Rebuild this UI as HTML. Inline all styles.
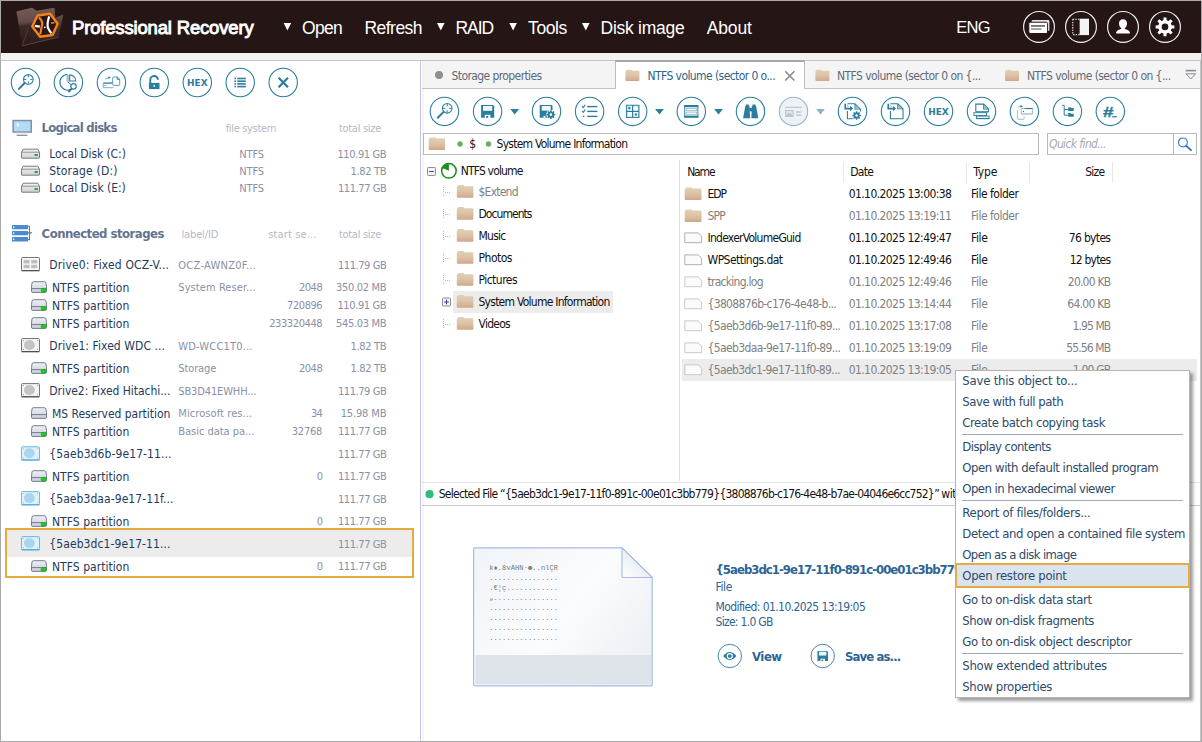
<!DOCTYPE html>
<html lang="en"><head><meta charset="utf-8"><title>Professional Recovery</title>
<style>
html,body{margin:0;padding:0;}
body{width:1202px;height:742px;position:relative;overflow:hidden;background:#fff;font-family:'DejaVu Sans Condensed','Liberation Sans','DejaVu Sans',sans-serif;font-size:12px;}
.a{position:absolute;display:block;box-sizing:border-box;}
.t{position:absolute;white-space:pre;line-height:normal;}
</style></head><body>
<div class="a" style="left:0px;top:0px;width:1202px;height:742px;background:#fff;border:1px solid #a9a9a9;"></div>
<div class="a" style="left:1px;top:1px;width:1200px;height:52px;background:#251514;"></div>
<div class="a" style="left:1px;top:53px;width:1200px;height:7px;background:#f3f3f3;"></div>
<div class="a" style="left:1px;top:60px;width:1200px;height:1px;background:#c4c4c4;"></div>
<div class="a" style="left:1200px;top:61px;width:1px;height:680px;background:#c6c6c6;"></div>
<svg class="a" style="left:15px;top:5px;" width="51" height="45"><g transform="translate(0,0)">
<defs>
<linearGradient id="lg1" x1="0" y1="0" x2="0.12" y2="1"><stop offset="0" stop-color="#775d58"/><stop offset="0.40" stop-color="#654b47"/><stop offset="0.50" stop-color="#3b2826"/><stop offset="1" stop-color="#2b1a19"/></linearGradient>
<linearGradient id="lg2" x1="1" y1="0" x2="0.2" y2="1"><stop offset="0" stop-color="#6a534f"/><stop offset="0.35" stop-color="#3c2a28"/><stop offset="1" stop-color="#2d1c1b"/></linearGradient>
</defs>
<path d="M1.4,6.4 L16.6,2.8 Q17.6,2.6 18.4,3.4 L21.6,5.8 L38.6,2.8 Q39.6,2.7 39.7,3.8 L41,24 L7.1,40.8 Z" fill="url(#lg1)"/>
<path d="M13.6,23 L48.3,9.6 L43.6,32.1 L7.1,40.8 Z" fill="url(#lg2)"/>
<path d="M7.1,40.8 L43.6,32.1" stroke="#5e4845" stroke-width="0.9"/>
<path d="M7.1,40.8 L13.6,23" stroke="#5a4441" stroke-width="0.7"/>
<polygon points="17.2,21.5 22.6,10.5 35.1,8.7 42.7,18.7 37.6,30.0 25.1,31.8" fill="#2a1716" stroke="#f5821a" stroke-width="2.4" stroke-linejoin="round"/>
<path d="M23.8,12.4 Q27.6,15.6 27.2,19 L25.2,29.4" fill="none" stroke="#f5821a" stroke-width="2.1"/>
<path d="M34.2,11.4 Q32,18 32.8,22.4 Q34,25.6 36.4,28.2" fill="none" stroke="#fff" stroke-width="2.2"/>
<path d="M19.8,20.9 L24.8,21.6" stroke="#fff" stroke-width="2.1"/>
<circle cx="29.8" cy="22.3" r="0.9" fill="#fff"/>
<path d="M36,18 L39.6,17.8" stroke="#f5821a" stroke-width="1.5"/>
</g></svg>
<span class="t" style="top:17.00px;font-size:18.5px;color:#fff;font-family:'Liberation Sans','DejaVu Sans Condensed',sans-serif;letter-spacing:-0.171px;left:72.00px;-webkit-text-stroke:0.9px #fff;">Professional Recovery</span>
<svg class="a" style="left:283px;top:23px;" width="10" height="9"><g transform="translate(0.6,0)"><polygon points="0,0 7.6,0 3.8,7.6" fill="#fff"/></g></svg>
<span class="t" style="top:18.00px;font-size:17.5px;color:#fff;font-family:'Liberation Sans','DejaVu Sans Condensed',sans-serif;letter-spacing:-0.703px;left:302.00px;">Open</span>
<span class="t" style="top:18.00px;font-size:17.5px;color:#fff;font-family:'Liberation Sans','DejaVu Sans Condensed',sans-serif;letter-spacing:-0.540px;left:364.50px;">Refresh</span>
<svg class="a" style="left:437px;top:23px;" width="9" height="9"><g transform="translate(0,0)"><polygon points="0,0 7.6,0 3.8,7.6" fill="#fff"/></g></svg>
<span class="t" style="top:18.00px;font-size:17.5px;color:#fff;font-family:'Liberation Sans','DejaVu Sans Condensed',sans-serif;letter-spacing:-1.078px;left:455.50px;">RAID</span>
<svg class="a" style="left:509px;top:23px;" width="9" height="9"><g transform="translate(0.3,0)"><polygon points="0,0 7.6,0 3.8,7.6" fill="#fff"/></g></svg>
<span class="t" style="top:18.00px;font-size:17.5px;color:#fff;font-family:'Liberation Sans','DejaVu Sans Condensed',sans-serif;letter-spacing:-0.372px;left:528.00px;">Tools</span>
<svg class="a" style="left:582px;top:23px;" width="9" height="9"><g transform="translate(0,0)"><polygon points="0,0 7.6,0 3.8,7.6" fill="#fff"/></g></svg>
<span class="t" style="top:18.00px;font-size:17.5px;color:#fff;font-family:'Liberation Sans','DejaVu Sans Condensed',sans-serif;letter-spacing:-0.256px;left:600.50px;">Disk image</span>
<span class="t" style="top:18.00px;font-size:17.5px;color:#fff;font-family:'Liberation Sans','DejaVu Sans Condensed',sans-serif;letter-spacing:-0.147px;left:706.70px;">About</span>
<span class="t" style="top:18.00px;font-size:16.5px;color:#fff;font-family:'Liberation Sans','DejaVu Sans Condensed',sans-serif;letter-spacing:-0.755px;left:956.30px;">ENG</span>
<svg class="a" style="left:1022px;top:9px;" width="35" height="36"><g transform="translate(0.0,0.9)"><g transform="translate(17.0,17.0)"><circle cx="0" cy="0" r="15.4" fill="none" stroke="#f2f2f2" stroke-width="1.15"/><rect x="-7.4" y="-6.8" width="17.8" height="11" rx="1.4" fill="#e8e8e8"/><rect x="-10.2" y="-4.7" width="18.8" height="11.3" rx="1.4" fill="#fff" stroke="#251514" stroke-width="1"/><rect x="-8" y="-1.8" width="14" height="1.7" fill="#6a6a6a"/><rect x="-8" y="1.4" width="10.5" height="1.5" fill="#8a8a8a"/></g></g></svg>
<svg class="a" style="left:1064px;top:9px;" width="35" height="36"><g transform="translate(0.0,0.9)"><g transform="translate(17.0,17.0)"><circle cx="0" cy="0" r="15.4" fill="none" stroke="#f2f2f2" stroke-width="1.15"/><rect x="-8.2" y="-7.7" width="7.4" height="15.4" fill="none" stroke="#fff" stroke-width="1.1" stroke-dasharray="1.3 1.3"/><rect x="-1.2" y="-8.2" width="9.2" height="16.4" fill="#f4f4f4"/></g></g></svg>
<svg class="a" style="left:1106px;top:9px;" width="35" height="36"><g transform="translate(0.0,0.9)"><g transform="translate(17.0,17.0)"><circle cx="0" cy="0" r="15.4" fill="none" stroke="#f2f2f2" stroke-width="1.15"/><path d="M0,-7.6 C2.6,-7.6 4,-5.6 4,-3.4 C4,-1.2 2.8,0.6 1.9,1.2 L1.9,2.2 C4,3 6.6,3.6 6.9,5.6 L6.9,6.6 L-6.9,6.6 L-6.9,5.6 C-6.6,3.6 -4,3 -1.9,2.2 L-1.9,1.2 C-2.8,0.6 -4,-1.2 -4,-3.4 C-4,-5.6 -2.6,-7.6 0,-7.6 Z" fill="#fff"/></g></g></svg>
<svg class="a" style="left:1148px;top:9px;" width="35" height="36"><g transform="translate(0.0,0.9)"><g transform="translate(17.0,17.0)"><circle cx="0" cy="0" r="15.4" fill="none" stroke="#f2f2f2" stroke-width="1.15"/><polygon points="-1.59,-6.61 -1.49,-9.38 1.49,-9.38 1.59,-6.61 3.55,-5.80 5.58,-7.69 7.69,-5.58 5.80,-3.55 6.61,-1.59 9.38,-1.49 9.38,1.49 6.61,1.59 5.80,3.55 7.69,5.58 5.58,7.69 3.55,5.80 1.59,6.61 1.49,9.38 -1.49,9.38 -1.59,6.61 -3.55,5.80 -5.58,7.69 -7.69,5.58 -5.80,3.55 -6.61,1.59 -9.38,1.49 -9.38,-1.49 -6.61,-1.59 -5.80,-3.55 -7.69,-5.58 -5.58,-7.69 -3.55,-5.80" fill="#fff"/><circle cx="0" cy="0" r="3.3" fill="#251514"/></g></g></svg>
<div class="a" style="left:420px;top:61px;width:1px;height:680px;background:#c6c6da;"></div>
<svg class="a" style="left:8px;top:65px;" width="35" height="35"><g transform="translate(0.5,0.5)"><g transform="translate(17.0,17.0)"><circle cx="0" cy="0" r="14.2" fill="none" stroke="#2b7d9d" stroke-width="1.1"/><circle cx="2.8" cy="-3.1" r="4.8" fill="none" stroke="#2b7d9d" stroke-width="1.1"/>
<path d="M-0.8,0.5 L-6.6,6.4" stroke="#2b7d9d" stroke-width="2" stroke-linecap="round"/>
<path d="M2.8,-7.4 V-5 M2.8,-1.2 V1.2 M-1.5,-3.1 H0.9 M4.7,-3.1 H7.1" stroke="#2b7d9d" stroke-width="1"/></g></g></svg>
<svg class="a" style="left:51px;top:65px;" width="35" height="35"><g transform="translate(0.4,0.5)"><g transform="translate(17.0,17.0)"><circle cx="0" cy="0" r="14.2" fill="none" stroke="#2b7d9d" stroke-width="1.1"/><path d="M-0.7,-8 A7.8,7.8 0 1 0 3.77,6.19" fill="none" stroke="#2b7d9d" stroke-width="1.1"/>
<rect x="-2" y="-7.6" width="3" height="6.8" fill="#a3c8da"/>
<path d="M1.3,-7.6 A6.1,6.1 0 0 1 7.4,-1.5 H1.3 Z" fill="#fff" stroke="#2b7d9d" stroke-width="1.1" stroke-linejoin="round"/>
<path d="M-0.6,-0.6 L2.6,2.2" stroke="#2b7d9d" stroke-width="1"/>
<circle cx="5.1" cy="3.9" r="2.7" fill="#fff" stroke="#2b7d9d" stroke-width="1.2"/>
<path d="M3,6.3 L0.6,9" stroke="#2b7d9d" stroke-width="1.9" stroke-linecap="round"/></g></g></svg>
<svg class="a" style="left:94px;top:65px;" width="35" height="35"><g transform="translate(0.4,0.5)"><g transform="translate(17.0,17.0)"><circle cx="0" cy="0" r="14.2" fill="none" stroke="#2b7d9d" stroke-width="1.1"/><path d="M-8.2,0.6 H2" stroke="#2b7d9d" stroke-width="1.3"/>
<path d="M-8.2,0.6 V5.2 H2.3" fill="none" stroke="#7fb0c6" stroke-width="1"/>
<path d="M-8.2,2.9 H-5" stroke="#7fb0c6" stroke-width="0.9"/>
<path d="M2.3,-5.6 H5.8 L8.3,-3.2 V2.2 Q8.3,2.9 7.6,2.9 H2 Q1.3,2.9 1.3,2.2 V-4.6 Q1.3,-5.6 2.3,-5.6 Z" fill="#fff" stroke="#5f9db8" stroke-width="1"/>
<path d="M5.8,-5.6 V-3.2 H8.3" fill="none" stroke="#2b7d9d" stroke-width="1"/>
<path d="M-6.4,-3 Q-4.6,-4.6 -2.6,-4.8" fill="none" stroke="#7fb0c6" stroke-width="1"/><path d="M-3,-6.2 L-0.6,-4.8 L-3,-3.6 Z" fill="#2b7d9d"/></g></g></svg>
<svg class="a" style="left:137px;top:65px;" width="35" height="35"><g transform="translate(0.3,0.5)"><g transform="translate(17.0,17.0)"><circle cx="0" cy="0" r="14.2" fill="none" stroke="#2b7d9d" stroke-width="1.1"/><rect x="-5.4" y="0.4" width="10.6" height="6.2" fill="#2b7d9d"/>
<path d="M-4,0.6 V-2.6 A3.8,3.8 0 0 1 3.6,-2.8" fill="none" stroke="#2b7d9d" stroke-width="1.9"/>
<rect x="-0.7" y="2.2" width="1.2" height="2.4" rx="0.5" fill="#fff"/></g></g></svg>
<svg class="a" style="left:180px;top:65px;" width="35" height="35"><g transform="translate(0.3,0.5)"><g transform="translate(17.0,17.0)"><circle cx="0" cy="0" r="14.2" fill="none" stroke="#2b7d9d" stroke-width="1.1"/><text x="0" y="3.55" text-anchor="middle" font-family="'DejaVu Sans','Liberation Sans',sans-serif" font-weight="bold" font-size="9.3" textLength="20.6" lengthAdjust="spacingAndGlyphs" fill="#2b7d9d">HEX</text></g></g></svg>
<svg class="a" style="left:223px;top:65px;" width="35" height="35"><g transform="translate(0.2,0.5)"><g transform="translate(17.0,17.0)"><circle cx="0" cy="0" r="14.2" fill="none" stroke="#2b7d9d" stroke-width="1.1"/><rect x="-5.8" y="-4.8" width="1.6" height="1.6" fill="#2b7d9d"/><rect x="-3" y="-4.8" width="8.6" height="1.6" fill="#2b7d9d"/><rect x="-5.8" y="-2.1" width="1.6" height="1.6" fill="#2b7d9d"/><rect x="-3" y="-2.1" width="8.6" height="1.6" fill="#2b7d9d"/><rect x="-5.8" y="0.6" width="1.6" height="1.6" fill="#2b7d9d"/><rect x="-3" y="0.6" width="8.6" height="1.6" fill="#2b7d9d"/><rect x="-5.8" y="3.3" width="1.6" height="1.6" fill="#2b7d9d"/><rect x="-3" y="3.3" width="8.6" height="1.6" fill="#2b7d9d"/></g></g></svg>
<svg class="a" style="left:266px;top:65px;" width="35" height="35"><g transform="translate(0.2,0.5)"><g transform="translate(17.0,17.0)"><circle cx="0" cy="0" r="14.2" fill="none" stroke="#2b7d9d" stroke-width="1.1"/><path d="M-4.6,-4.8 L4.8,4.8 M4.8,-4.8 L-4.6,4.8" stroke="#2b7d9d" stroke-width="2.2" stroke-linecap="butt"/></g></g></svg>
<svg class="a" style="left:12px;top:119px;" width="21" height="19"><g transform="translate(0.2,0.7)"><rect x="0.95" y="0.85" width="18.1" height="11.5" fill="#b0dcf7" stroke="#8b8da2" stroke-width="1.5"/>
<path d="M4.6,2.8 L7.6,5.4 L6,5.6 L6.8,7.2 L6,7.4 L5.4,6 L4.6,6.8 Z" fill="#f4f8fc"/>
<rect x="3.6" y="13.1" width="12.2" height="2" fill="#ececf1"/>
<rect x="4.5" y="15.1" width="10.6" height="1.2" fill="#8b8da2"/></g></svg>
<span class="t" style="top:120.00px;font-size:13px;color:#62748f;font-weight:bold;letter-spacing:-0.757px;left:41.60px;">Logical disks</span>
<span class="t" style="top:122.00px;font-size:11px;color:#b4b9c8;letter-spacing:-0.336px;left:225.70px;">file system</span>
<span class="t" style="top:122.00px;font-size:11px;color:#b4b9c8;letter-spacing:-0.277px;left:338.90px;">total size</span>
<svg class="a" style="left:21px;top:148px;" width="20" height="12"><g transform="translate(0,0.6)"><defs><linearGradient id="dk" x1="0" y1="0" x2="0" y2="1"><stop offset="0" stop-color="#f4f4f6"/><stop offset="1" stop-color="#d0d0d6"/></linearGradient></defs>
<path d="M2.2,0.6 H16.8 L18.5,3.6 V9 Q18.5,9.6 17.9,9.6 H1.1 Q0.5,9.6 0.5,9 V3.6 Z" fill="url(#dk)" stroke="#6c6c74" stroke-width="0.9"/>
<path d="M0.8,3.6 H18.2" stroke="#7a7a82" stroke-width="0.8"/>
<rect x="13.6" y="5.4" width="3.2" height="2" fill="#18b020"/></g></svg>
<span class="t" style="top:147.00px;font-size:12px;color:#1e3a5c;letter-spacing:-0.074px;left:49.30px;">Local Disk (C:)</span>
<span class="t" style="top:148.00px;font-size:11px;color:#8a90a6;letter-spacing:-0.134px;left:239.30px;">NTFS</span>
<span class="t" style="top:148.00px;font-size:11px;color:#8a90a6;letter-spacing:-0.369px;left:337.40px;">110.91 GB</span>
<svg class="a" style="left:21px;top:165px;" width="20" height="12"><g transform="translate(0,0.6)"><defs><linearGradient id="dk" x1="0" y1="0" x2="0" y2="1"><stop offset="0" stop-color="#f4f4f6"/><stop offset="1" stop-color="#d0d0d6"/></linearGradient></defs>
<path d="M2.2,0.6 H16.8 L18.5,3.6 V9 Q18.5,9.6 17.9,9.6 H1.1 Q0.5,9.6 0.5,9 V3.6 Z" fill="url(#dk)" stroke="#6c6c74" stroke-width="0.9"/>
<path d="M0.8,3.6 H18.2" stroke="#7a7a82" stroke-width="0.8"/>
<rect x="13.6" y="5.4" width="3.2" height="2" fill="#18b020"/></g></svg>
<span class="t" style="top:164.00px;font-size:12px;color:#1e3a5c;letter-spacing:0.204px;left:49.30px;">Storage (D:)</span>
<span class="t" style="top:165.00px;font-size:11px;color:#8a90a6;letter-spacing:-0.134px;left:239.30px;">NTFS</span>
<span class="t" style="top:165.00px;font-size:11px;color:#8a90a6;letter-spacing:-0.317px;left:350.50px;">1.82 TB</span>
<svg class="a" style="left:21px;top:182px;" width="20" height="12"><g transform="translate(0,0.6)"><defs><linearGradient id="dk" x1="0" y1="0" x2="0" y2="1"><stop offset="0" stop-color="#f4f4f6"/><stop offset="1" stop-color="#d0d0d6"/></linearGradient></defs>
<path d="M2.2,0.6 H16.8 L18.5,3.6 V9 Q18.5,9.6 17.9,9.6 H1.1 Q0.5,9.6 0.5,9 V3.6 Z" fill="url(#dk)" stroke="#6c6c74" stroke-width="0.9"/>
<path d="M0.8,3.6 H18.2" stroke="#7a7a82" stroke-width="0.8"/>
<rect x="13.6" y="5.4" width="3.2" height="2" fill="#18b020"/></g></svg>
<span class="t" style="top:181.00px;font-size:12px;color:#1e3a5c;letter-spacing:-0.026px;left:49.30px;">Local Disk (E:)</span>
<span class="t" style="top:182.00px;font-size:11px;color:#8a90a6;letter-spacing:-0.134px;left:239.30px;">NTFS</span>
<span class="t" style="top:182.00px;font-size:11px;color:#8a90a6;letter-spacing:-0.435px;left:338.00px;">111.77 GB</span>
<svg class="a" style="left:12px;top:225px;" width="22" height="18"><g transform="translate(0,0)"><g fill="#4a8bd2"><rect x="0" y="0" width="16" height="4.3" rx="0.5"/><rect x="0" y="6" width="16" height="4.3" rx="0.5"/><rect x="0" y="12" width="16" height="4.4" rx="0.5"/></g>
<g fill="#eaf3fc"><rect x="1" y="1.2" width="1.3" height="1.9" rx="0.5"/><rect x="1" y="7.2" width="1.3" height="1.9" rx="0.5"/><rect x="1" y="13.2" width="1.3" height="1.9" rx="0.5"/></g>
<path d="M16,1.3 H17.5 V14.6 H16 M15.4,7.9 H20" fill="none" stroke="#6f7689" stroke-width="1.1"/></g></svg>
<span class="t" style="top:226.00px;font-size:13px;color:#62748f;font-weight:bold;letter-spacing:-0.519px;left:41.60px;">Connected storages</span>
<span class="t" style="top:228.00px;font-size:11px;color:#b4b9c8;letter-spacing:-0.114px;left:181.40px;">label/ID</span>
<span class="t" style="top:228.00px;font-size:11px;color:#b4b9c8;letter-spacing:0.140px;left:268.20px;">start se...</span>
<span class="t" style="top:228.00px;font-size:11px;color:#b4b9c8;letter-spacing:-0.277px;left:338.90px;">total size</span>
<div class="a" style="left:5px;top:528px;width:409px;height:50px;border:2px solid #e5aa40;"></div>
<div class="a" style="left:7px;top:530px;width:405px;height:27px;background:#ececec;"></div>
<svg class="a" style="left:21px;top:257px;" width="20" height="15"><g transform="translate(0,0.0)"><rect x="0.5" y="0.5" width="18" height="13.2" rx="1" fill="#f6f6f6" stroke="#666" stroke-width="0.9"/>
<path d="M0.5,13.7 H18.5" stroke="#444" stroke-width="1"/>
<rect x="2.6" y="3" width="6" height="3.4" fill="#bdbdbd"/><rect x="10.2" y="3" width="6" height="3.4" fill="#bdbdbd"/>
<rect x="2.6" y="7.8" width="6" height="3.4" fill="#bdbdbd"/><rect x="10.2" y="7.8" width="6" height="3.4" fill="#bdbdbd"/></g></svg>
<span class="t" style="top:258.00px;font-size:12px;color:#1e3a5c;letter-spacing:0.149px;left:49.30px;">Drive0: Fixed OCZ-V...</span>
<span class="t" style="top:259.00px;font-size:11px;color:#8a90a6;letter-spacing:0.276px;left:178.30px;">OCZ-AWNZ0F...</span>
<span class="t" style="top:259.00px;font-size:11px;color:#8a90a6;letter-spacing:-0.424px;left:337.90px;">111.79 GB</span>
<svg class="a" style="left:31px;top:281px;" width="17" height="13"><g transform="translate(0,0.2)"><defs><linearGradient id="pk" x1="0" y1="0" x2="0" y2="1"><stop offset="0" stop-color="#eef0f5"/><stop offset="1" stop-color="#c9cdd8"/></linearGradient></defs>
<path d="M2.4,0.5 H13.4 Q14.6,0.5 15,1.8 L15.5,5.5 V10 Q15.5,11.2 14.3,11.2 H1.7 Q0.5,11.2 0.5,10 V5.5 L1,1.8 Q1.2,0.5 2.4,0.5 Z" fill="url(#pk)" stroke="#6a7184" stroke-width="0.9"/>
<path d="M0.8,7.4 H15.2" stroke="#6a7184" stroke-width="0.9"/><ellipse cx="12.5" cy="9.1" rx="2.5" ry="1.9" fill="#06e006" stroke="#0a9c0a" stroke-width="0.6"/></g></svg>
<span class="t" style="top:281.00px;font-size:12px;color:#1e3a5c;letter-spacing:0.038px;left:52.00px;">NTFS partition</span>
<span class="t" style="top:281.00px;font-size:11px;color:#8a90a6;letter-spacing:0.077px;left:178.30px;">System Reser...</span>
<span class="t" style="top:281.00px;font-size:11px;color:#8a90a6;letter-spacing:-0.497px;left:299.00px;">2048</span>
<span class="t" style="top:281.00px;font-size:11px;color:#8a90a6;letter-spacing:-0.310px;left:336.00px;">350.02 MB</span>
<svg class="a" style="left:31px;top:299px;" width="17" height="13"><g transform="translate(0,0.2)"><defs><linearGradient id="pk" x1="0" y1="0" x2="0" y2="1"><stop offset="0" stop-color="#eef0f5"/><stop offset="1" stop-color="#c9cdd8"/></linearGradient></defs>
<path d="M2.4,0.5 H13.4 Q14.6,0.5 15,1.8 L15.5,5.5 V10 Q15.5,11.2 14.3,11.2 H1.7 Q0.5,11.2 0.5,10 V5.5 L1,1.8 Q1.2,0.5 2.4,0.5 Z" fill="url(#pk)" stroke="#6a7184" stroke-width="0.9"/>
<path d="M0.8,7.4 H15.2" stroke="#6a7184" stroke-width="0.9"/><ellipse cx="12.5" cy="9.1" rx="2.5" ry="1.9" fill="#06e006" stroke="#0a9c0a" stroke-width="0.6"/></g></svg>
<span class="t" style="top:299.00px;font-size:12px;color:#1e3a5c;letter-spacing:0.038px;left:52.00px;">NTFS partition</span>
<span class="t" style="top:299.00px;font-size:11px;color:#8a90a6;letter-spacing:-0.447px;left:287.10px;">720896</span>
<span class="t" style="top:299.00px;font-size:11px;color:#8a90a6;letter-spacing:-0.369px;left:337.40px;">110.91 GB</span>
<svg class="a" style="left:31px;top:317px;" width="17" height="13"><g transform="translate(0,0.2)"><defs><linearGradient id="pk" x1="0" y1="0" x2="0" y2="1"><stop offset="0" stop-color="#eef0f5"/><stop offset="1" stop-color="#c9cdd8"/></linearGradient></defs>
<path d="M2.4,0.5 H13.4 Q14.6,0.5 15,1.8 L15.5,5.5 V10 Q15.5,11.2 14.3,11.2 H1.7 Q0.5,11.2 0.5,10 V5.5 L1,1.8 Q1.2,0.5 2.4,0.5 Z" fill="url(#pk)" stroke="#6a7184" stroke-width="0.9"/>
<path d="M0.8,7.4 H15.2" stroke="#6a7184" stroke-width="0.9"/><ellipse cx="12.5" cy="9.1" rx="2.5" ry="1.9" fill="#06e006" stroke="#0a9c0a" stroke-width="0.6"/></g></svg>
<span class="t" style="top:317.00px;font-size:12px;color:#1e3a5c;letter-spacing:0.038px;left:52.00px;">NTFS partition</span>
<span class="t" style="top:317.00px;font-size:11px;color:#8a90a6;letter-spacing:-0.406px;left:269.20px;">233320448</span>
<span class="t" style="top:317.00px;font-size:11px;color:#8a90a6;letter-spacing:-0.310px;left:336.00px;">545.03 MB</span>
<svg class="a" style="left:21px;top:338px;" width="20" height="15"><g transform="translate(0,0.0)"><rect x="0.5" y="0.5" width="18" height="13.2" rx="1" fill="#f4f4f4" stroke="#666" stroke-width="0.9"/>
<path d="M0.5,13.7 H18.5" stroke="#444" stroke-width="1"/>
<ellipse cx="8.4" cy="7" rx="5.4" ry="5" fill="#c4c4c4"/>
<circle cx="2.4" cy="2.4" r="0.5" fill="#777"/><circle cx="16.6" cy="2.4" r="0.5" fill="#777"/><circle cx="2.4" cy="11.6" r="0.5" fill="#777"/><circle cx="16.6" cy="11.6" r="0.5" fill="#777"/></g></svg>
<span class="t" style="top:339.00px;font-size:12px;color:#1e3a5c;letter-spacing:0.069px;left:49.30px;">Drive1: Fixed WDC ...</span>
<span class="t" style="top:340.00px;font-size:11px;color:#8a90a6;letter-spacing:0.173px;left:178.30px;">WD-WCC1T0...</span>
<span class="t" style="top:340.00px;font-size:11px;color:#8a90a6;letter-spacing:-0.317px;left:350.50px;">1.82 TB</span>
<svg class="a" style="left:31px;top:362px;" width="17" height="13"><g transform="translate(0,0.2)"><defs><linearGradient id="pk" x1="0" y1="0" x2="0" y2="1"><stop offset="0" stop-color="#eef0f5"/><stop offset="1" stop-color="#c9cdd8"/></linearGradient></defs>
<path d="M2.4,0.5 H13.4 Q14.6,0.5 15,1.8 L15.5,5.5 V10 Q15.5,11.2 14.3,11.2 H1.7 Q0.5,11.2 0.5,10 V5.5 L1,1.8 Q1.2,0.5 2.4,0.5 Z" fill="url(#pk)" stroke="#6a7184" stroke-width="0.9"/>
<path d="M0.8,7.4 H15.2" stroke="#6a7184" stroke-width="0.9"/><ellipse cx="12.5" cy="9.1" rx="2.5" ry="1.9" fill="#06e006" stroke="#0a9c0a" stroke-width="0.6"/></g></svg>
<span class="t" style="top:362.00px;font-size:12px;color:#1e3a5c;letter-spacing:0.038px;left:52.00px;">NTFS partition</span>
<span class="t" style="top:362.00px;font-size:11px;color:#8a90a6;letter-spacing:-0.119px;left:178.30px;">Storage</span>
<span class="t" style="top:362.00px;font-size:11px;color:#8a90a6;letter-spacing:-0.497px;left:299.00px;">2048</span>
<span class="t" style="top:362.00px;font-size:11px;color:#8a90a6;letter-spacing:-0.317px;left:350.50px;">1.82 TB</span>
<svg class="a" style="left:21px;top:383px;" width="20" height="15"><g transform="translate(0,0.1)"><rect x="0.5" y="0.5" width="18" height="13.2" rx="1" fill="#f4f4f4" stroke="#666" stroke-width="0.9"/>
<path d="M0.5,13.7 H18.5" stroke="#444" stroke-width="1"/>
<ellipse cx="8.4" cy="7" rx="5.4" ry="5" fill="#c4c4c4"/>
<circle cx="2.4" cy="2.4" r="0.5" fill="#777"/><circle cx="16.6" cy="2.4" r="0.5" fill="#777"/><circle cx="2.4" cy="11.6" r="0.5" fill="#777"/><circle cx="16.6" cy="11.6" r="0.5" fill="#777"/></g></svg>
<span class="t" style="top:384.00px;font-size:12px;color:#1e3a5c;letter-spacing:-0.043px;left:49.30px;">Drive2: Fixed Hitachi...</span>
<span class="t" style="top:385.00px;font-size:11px;color:#8a90a6;letter-spacing:-0.135px;left:178.30px;">SB3D41EWHH...</span>
<span class="t" style="top:385.00px;font-size:11px;color:#8a90a6;letter-spacing:-0.424px;left:337.90px;">111.79 GB</span>
<svg class="a" style="left:31px;top:407px;" width="17" height="13"><g transform="translate(0,0.2)"><defs><linearGradient id="pk" x1="0" y1="0" x2="0" y2="1"><stop offset="0" stop-color="#eef0f5"/><stop offset="1" stop-color="#c9cdd8"/></linearGradient></defs>
<path d="M2.4,0.5 H13.4 Q14.6,0.5 15,1.8 L15.5,5.5 V10 Q15.5,11.2 14.3,11.2 H1.7 Q0.5,11.2 0.5,10 V5.5 L1,1.8 Q1.2,0.5 2.4,0.5 Z" fill="url(#pk)" stroke="#6a7184" stroke-width="0.9"/>
<path d="M0.8,7.4 H15.2" stroke="#6a7184" stroke-width="0.9"/></g></svg>
<span class="t" style="top:407.00px;font-size:12px;color:#1e3a5c;letter-spacing:-0.036px;left:52.00px;">MS Reserved partition</span>
<span class="t" style="top:407.00px;font-size:11px;color:#8a90a6;letter-spacing:0.086px;left:178.30px;">Microsoft res...</span>
<span class="t" style="top:407.00px;font-size:11px;color:#8a90a6;letter-spacing:-0.697px;left:311.00px;">34</span>
<span class="t" style="top:407.00px;font-size:11px;color:#8a90a6;letter-spacing:-0.150px;left:340.70px;">15.98 MB</span>
<svg class="a" style="left:31px;top:425px;" width="17" height="13"><g transform="translate(0,0.2)"><defs><linearGradient id="pk" x1="0" y1="0" x2="0" y2="1"><stop offset="0" stop-color="#eef0f5"/><stop offset="1" stop-color="#c9cdd8"/></linearGradient></defs>
<path d="M2.4,0.5 H13.4 Q14.6,0.5 15,1.8 L15.5,5.5 V10 Q15.5,11.2 14.3,11.2 H1.7 Q0.5,11.2 0.5,10 V5.5 L1,1.8 Q1.2,0.5 2.4,0.5 Z" fill="url(#pk)" stroke="#6a7184" stroke-width="0.9"/>
<path d="M0.8,7.4 H15.2" stroke="#6a7184" stroke-width="0.9"/><ellipse cx="12.5" cy="9.1" rx="2.5" ry="1.9" fill="#06e006" stroke="#0a9c0a" stroke-width="0.6"/></g></svg>
<span class="t" style="top:425.00px;font-size:12px;color:#1e3a5c;letter-spacing:0.038px;left:52.00px;">NTFS partition</span>
<span class="t" style="top:425.00px;font-size:11px;color:#8a90a6;letter-spacing:-0.035px;left:178.30px;">Basic data pa...</span>
<span class="t" style="top:425.00px;font-size:11px;color:#8a90a6;letter-spacing:-0.217px;left:291.80px;">32768</span>
<span class="t" style="top:425.00px;font-size:11px;color:#8a90a6;letter-spacing:-0.435px;left:338.00px;">111.77 GB</span>
<svg class="a" style="left:21px;top:446px;" width="20" height="16"><g transform="translate(0,0.3)"><rect x="0.5" y="0.5" width="18" height="13.2" rx="1" fill="#dff1fb" stroke="#56b4e4" stroke-width="0.9"/>
<path d="M0.5,13.7 H18.5" stroke="#3fa4dc" stroke-width="1"/>
<ellipse cx="8.4" cy="7" rx="5.4" ry="5" fill="#a9d6ee"/>
<circle cx="2.4" cy="2.4" r="0.5" fill="#6bb8e0"/><circle cx="16.6" cy="2.4" r="0.5" fill="#6bb8e0"/><circle cx="2.4" cy="11.6" r="0.5" fill="#6bb8e0"/><circle cx="16.6" cy="11.6" r="0.5" fill="#6bb8e0"/></g></svg>
<span class="t" style="top:447.00px;font-size:12px;color:#1e3a5c;letter-spacing:0.097px;left:49.30px;">{5aeb3d6b-9e17-11...</span>
<span class="t" style="top:448.00px;font-size:11px;color:#8a90a6;letter-spacing:-0.435px;left:338.00px;">111.77 GB</span>
<svg class="a" style="left:31px;top:470px;" width="17" height="13"><g transform="translate(0,0.2)"><defs><linearGradient id="pk" x1="0" y1="0" x2="0" y2="1"><stop offset="0" stop-color="#eef0f5"/><stop offset="1" stop-color="#c9cdd8"/></linearGradient></defs>
<path d="M2.4,0.5 H13.4 Q14.6,0.5 15,1.8 L15.5,5.5 V10 Q15.5,11.2 14.3,11.2 H1.7 Q0.5,11.2 0.5,10 V5.5 L1,1.8 Q1.2,0.5 2.4,0.5 Z" fill="url(#pk)" stroke="#6a7184" stroke-width="0.9"/>
<path d="M0.8,7.4 H15.2" stroke="#6a7184" stroke-width="0.9"/><ellipse cx="12.5" cy="9.1" rx="2.5" ry="1.9" fill="#06e006" stroke="#0a9c0a" stroke-width="0.6"/></g></svg>
<span class="t" style="top:470.00px;font-size:12px;color:#1e3a5c;letter-spacing:0.038px;left:52.00px;">NTFS partition</span>
<span class="t" style="top:470.00px;font-size:11px;color:#8a90a6;letter-spacing:-0.897px;left:316.80px;">0</span>
<span class="t" style="top:470.00px;font-size:11px;color:#8a90a6;letter-spacing:-0.435px;left:338.00px;">111.77 GB</span>
<svg class="a" style="left:21px;top:491px;" width="20" height="15"><g transform="translate(0,0.1)"><rect x="0.5" y="0.5" width="18" height="13.2" rx="1" fill="#dff1fb" stroke="#56b4e4" stroke-width="0.9"/>
<path d="M0.5,13.7 H18.5" stroke="#3fa4dc" stroke-width="1"/>
<ellipse cx="8.4" cy="7" rx="5.4" ry="5" fill="#a9d6ee"/>
<circle cx="2.4" cy="2.4" r="0.5" fill="#6bb8e0"/><circle cx="16.6" cy="2.4" r="0.5" fill="#6bb8e0"/><circle cx="2.4" cy="11.6" r="0.5" fill="#6bb8e0"/><circle cx="16.6" cy="11.6" r="0.5" fill="#6bb8e0"/></g></svg>
<span class="t" style="top:492.00px;font-size:12px;color:#1e3a5c;letter-spacing:0.072px;left:49.30px;">{5aeb3daa-9e17-11f...</span>
<span class="t" style="top:493.00px;font-size:11px;color:#8a90a6;letter-spacing:-0.435px;left:338.00px;">111.77 GB</span>
<svg class="a" style="left:31px;top:515px;" width="17" height="13"><g transform="translate(0,0.2)"><defs><linearGradient id="pk" x1="0" y1="0" x2="0" y2="1"><stop offset="0" stop-color="#eef0f5"/><stop offset="1" stop-color="#c9cdd8"/></linearGradient></defs>
<path d="M2.4,0.5 H13.4 Q14.6,0.5 15,1.8 L15.5,5.5 V10 Q15.5,11.2 14.3,11.2 H1.7 Q0.5,11.2 0.5,10 V5.5 L1,1.8 Q1.2,0.5 2.4,0.5 Z" fill="url(#pk)" stroke="#6a7184" stroke-width="0.9"/>
<path d="M0.8,7.4 H15.2" stroke="#6a7184" stroke-width="0.9"/><ellipse cx="12.5" cy="9.1" rx="2.5" ry="1.9" fill="#06e006" stroke="#0a9c0a" stroke-width="0.6"/></g></svg>
<span class="t" style="top:515.00px;font-size:12px;color:#1e3a5c;letter-spacing:0.038px;left:52.00px;">NTFS partition</span>
<span class="t" style="top:515.00px;font-size:11px;color:#8a90a6;letter-spacing:-0.897px;left:316.80px;">0</span>
<span class="t" style="top:515.00px;font-size:11px;color:#8a90a6;letter-spacing:-0.435px;left:338.00px;">111.77 GB</span>
<svg class="a" style="left:21px;top:536px;" width="20" height="15"><g transform="translate(0,0.1)"><rect x="0.5" y="0.5" width="18" height="13.2" rx="1" fill="#dff1fb" stroke="#56b4e4" stroke-width="0.9"/>
<path d="M0.5,13.7 H18.5" stroke="#3fa4dc" stroke-width="1"/>
<ellipse cx="8.4" cy="7" rx="5.4" ry="5" fill="#a9d6ee"/>
<circle cx="2.4" cy="2.4" r="0.5" fill="#6bb8e0"/><circle cx="16.6" cy="2.4" r="0.5" fill="#6bb8e0"/><circle cx="2.4" cy="11.6" r="0.5" fill="#6bb8e0"/><circle cx="16.6" cy="11.6" r="0.5" fill="#6bb8e0"/></g></svg>
<span class="t" style="top:537.00px;font-size:12px;color:#1e3a5c;letter-spacing:0.093px;left:49.30px;">{5aeb3dc1-9e17-11...</span>
<span class="t" style="top:538.00px;font-size:11px;color:#8a90a6;letter-spacing:-0.435px;left:338.00px;">111.77 GB</span>
<svg class="a" style="left:31px;top:560px;" width="17" height="13"><g transform="translate(0,0.2)"><defs><linearGradient id="pk" x1="0" y1="0" x2="0" y2="1"><stop offset="0" stop-color="#eef0f5"/><stop offset="1" stop-color="#c9cdd8"/></linearGradient></defs>
<path d="M2.4,0.5 H13.4 Q14.6,0.5 15,1.8 L15.5,5.5 V10 Q15.5,11.2 14.3,11.2 H1.7 Q0.5,11.2 0.5,10 V5.5 L1,1.8 Q1.2,0.5 2.4,0.5 Z" fill="url(#pk)" stroke="#6a7184" stroke-width="0.9"/>
<path d="M0.8,7.4 H15.2" stroke="#6a7184" stroke-width="0.9"/><ellipse cx="12.5" cy="9.1" rx="2.5" ry="1.9" fill="#06e006" stroke="#0a9c0a" stroke-width="0.6"/></g></svg>
<span class="t" style="top:560.00px;font-size:12px;color:#1e3a5c;letter-spacing:0.038px;left:52.00px;">NTFS partition</span>
<span class="t" style="top:560.00px;font-size:11px;color:#8a90a6;letter-spacing:-0.897px;left:316.80px;">0</span>
<span class="t" style="top:560.00px;font-size:11px;color:#8a90a6;letter-spacing:-0.435px;left:338.00px;">111.77 GB</span>
<div class="a" style="left:422px;top:89px;width:2px;height:652px;background:#f6f6f9;"></div>
<div class="a" style="left:422px;top:61px;width:778px;height:27px;background:#f4f4f4;"></div>
<div class="a" style="left:422px;top:88px;width:778px;height:1px;background:#c2c2c2;"></div>
<div class="a" style="left:615px;top:60px;width:190px;height:29px;background:#fff;border:1px solid #bdbdbd;border-bottom:none;border-top:2px solid #a8a8a8;"></div>
<svg class="a" style="left:434px;top:70px;" width="10" height="10"><g transform="translate(0.5,0.5)"><circle cx="4.5" cy="4.5" r="4" fill="#8f8f8f"/></g></svg>
<span class="t" style="top:69.00px;font-size:12px;color:#606978;letter-spacing:-0.596px;left:451.60px;">Storage properties</span>
<svg class="a" style="left:625px;top:69px;" width="15" height="13"><g transform="translate(0.4,0.6) scale(0.8750,0.9500)"><defs><linearGradient id="fg1" x1="0" y1="0" x2="0" y2="1"><stop offset="0" stop-color="#e1d0b6"/><stop offset="0.45" stop-color="#dcc5a9"/><stop offset="0.85" stop-color="#d5b092"/><stop offset="1" stop-color="#d0a686"/></linearGradient></defs>
<g><path d="M1.6,0.2 H6.2 Q7,0.2 7.2,0.8 L7.4,1.3 H15 Q16,1.3 16,2.3 V11 Q16,12 15,12 H1 Q0,12 0,11 V2.2 Q0,1.3 0.8,1.2 Q0.9,0.2 1.6,0.2 Z" fill="url(#fg1)"/></g></g></svg>
<span class="t" style="top:69.00px;font-size:12px;color:#2b6489;letter-spacing:-0.576px;left:647.50px;">NTFS volume (sector 0 o...</span>
<svg class="a" style="left:784px;top:70px;" width="13" height="12"><g transform="translate(0,0.5)"><path d="M1.2,0.8 L10.4,10 M10.4,0.8 L1.2,10" stroke="#8a8a8a" stroke-width="1.6"/></g></svg>
<svg class="a" style="left:815px;top:69px;" width="15" height="13"><g transform="translate(0.4,0.6) scale(0.8750,0.9500)"><defs><linearGradient id="fg2" x1="0" y1="0" x2="0" y2="1"><stop offset="0" stop-color="#e1d0b6"/><stop offset="0.45" stop-color="#dcc5a9"/><stop offset="0.85" stop-color="#d5b092"/><stop offset="1" stop-color="#d0a686"/></linearGradient></defs>
<g><path d="M1.6,0.2 H6.2 Q7,0.2 7.2,0.8 L7.4,1.3 H15 Q16,1.3 16,2.3 V11 Q16,12 15,12 H1 Q0,12 0,11 V2.2 Q0,1.3 0.8,1.2 Q0.9,0.2 1.6,0.2 Z" fill="url(#fg2)"/></g></g></svg>
<span class="t" style="top:69.00px;font-size:12px;color:#606978;letter-spacing:-0.562px;left:837.00px;">NTFS volume (sector 0 on {...</span>
<svg class="a" style="left:1005px;top:69px;" width="15" height="13"><g transform="translate(0,0.6) scale(0.8750,0.9500)"><defs><linearGradient id="fg3" x1="0" y1="0" x2="0" y2="1"><stop offset="0" stop-color="#e1d0b6"/><stop offset="0.45" stop-color="#dcc5a9"/><stop offset="0.85" stop-color="#d5b092"/><stop offset="1" stop-color="#d0a686"/></linearGradient></defs>
<g><path d="M1.6,0.2 H6.2 Q7,0.2 7.2,0.8 L7.4,1.3 H15 Q16,1.3 16,2.3 V11 Q16,12 15,12 H1 Q0,12 0,11 V2.2 Q0,1.3 0.8,1.2 Q0.9,0.2 1.6,0.2 Z" fill="url(#fg3)"/></g></g></svg>
<span class="t" style="top:69.00px;font-size:12px;color:#606978;letter-spacing:-0.562px;left:1027.00px;">NTFS volume (sector 0 on {...</span>
<svg class="a" style="left:1185px;top:69px;" width="13" height="13"><g transform="translate(0,0)"><path d="M0.6,1.6 H11" stroke="#8a8a98" stroke-width="1.6"/><path d="M1,4.8 H10.6 L5.8,10 Z" fill="none" stroke="#8a8a98" stroke-width="1"/></g></svg>
<svg class="a" style="left:427px;top:94px;" width="35" height="35"><g transform="translate(0.4,0.4)"><g transform="translate(17.0,17.0)"><circle cx="0" cy="0" r="14.2" fill="none" stroke="#2b7d9d" stroke-width="1.1"/><circle cx="2.8" cy="-3.1" r="4.8" fill="none" stroke="#2b7d9d" stroke-width="1.1"/>
<path d="M-0.8,0.5 L-6.6,6.4" stroke="#2b7d9d" stroke-width="2" stroke-linecap="round"/>
<path d="M2.8,-7.4 V-5 M2.8,-1.2 V1.2 M-1.5,-3.1 H0.9 M4.7,-3.1 H7.1" stroke="#2b7d9d" stroke-width="1"/></g></g></svg>
<svg class="a" style="left:470px;top:94px;" width="36" height="35"><g transform="translate(0.6,0.4)"><g transform="translate(17.0,17.0)"><circle cx="0" cy="0" r="14.2" fill="none" stroke="#2b7d9d" stroke-width="1.1"/><g transform="translate(0,0) scale(1.0)"><path d="M-6.5,-6.4 H5.4 L6.6,-5.2 V6.4 H-6.5 Z" fill="#2b7d9d"/>
<rect x="-4.6" y="-5.4" width="9.2" height="4.8" fill="#f2f7fa"/>
<rect x="-2.8" y="3.4" width="5.6" height="3.1" fill="#fff"/><rect x="-1.4" y="4.6" width="2" height="1.9" fill="#2b7d9d"/></g></g></g></svg>
<svg class="a" style="left:529px;top:94px;" width="35" height="35"><g transform="translate(0.5,0.4)"><g transform="translate(17.0,17.0)"><circle cx="0" cy="0" r="14.2" fill="none" stroke="#2b7d9d" stroke-width="1.1"/><path d="M-6.8,-6.4 H5.2 L6,-5.6 V0 H1 V6.4 H-6.8 Z" fill="#2b7d9d"/>
<rect x="-4.8" y="-5.4" width="9" height="4.6" fill="#f2f7fa"/>
<rect x="-3" y="4.4" width="2" height="2" fill="#fff"/>
<circle cx="4.4" cy="3.2" r="4.6" fill="#fff"/><polygon points="3.58,0.00 3.70,-1.24 5.10,-1.24 5.22,0.00 6.08,0.36 7.05,-0.44 8.04,0.55 7.24,1.52 7.60,2.38 8.84,2.50 8.84,3.90 7.60,4.02 7.24,4.88 8.04,5.85 7.05,6.84 6.08,6.04 5.22,6.40 5.10,7.64 3.70,7.64 3.58,6.40 2.72,6.04 1.75,6.84 0.76,5.85 1.56,4.88 1.20,4.02 -0.04,3.90 -0.04,2.50 1.20,2.38 1.56,1.52 0.76,0.55 1.75,-0.44 2.72,0.36" fill="#2b7d9d"/><circle cx="4.4" cy="3.2" r="1.3" fill="#fff"/></g></g></svg>
<svg class="a" style="left:572px;top:94px;" width="36" height="35"><g transform="translate(0.6,0.4)"><g transform="translate(17.0,17.0)"><circle cx="0" cy="0" r="14.2" fill="none" stroke="#2b7d9d" stroke-width="1.1"/><rect x="-2.4" y="-5.5" width="10.2" height="1.4" fill="#2b7d9d"/><rect x="-2.4" y="-0.7" width="10.2" height="1.4" fill="#2b7d9d"/><rect x="-2.4" y="4.3" width="10.2" height="1.4" fill="#2b7d9d"/><path d="M-7.6,-5.2 L-6.4,-3.8 L-4.4,-6.6 M-7.6,-0.4 L-6.4,1 L-4.4,-1.8" fill="none" stroke="#2b7d9d" stroke-width="1.1"/><rect x="-6.8" y="4.3" width="1.6" height="1.4" fill="#2b7d9d"/></g></g></svg>
<svg class="a" style="left:615px;top:94px;" width="36" height="35"><g transform="translate(0.7,0.4)"><g transform="translate(17.0,17.0)"><circle cx="0" cy="0" r="14.2" fill="none" stroke="#2b7d9d" stroke-width="1.1"/><rect x="-6.3" y="-6.2" width="12.6" height="12.4" fill="#9cc3d4"/>
<rect x="-6.3" y="-6.2" width="12.6" height="12.4" fill="none" stroke="#2b7d9d" stroke-width="0.9"/>
<rect x="-5.2" y="-5.1" width="4.7" height="4.7" fill="#fff"/><rect x="0.5" y="-5.1" width="4.7" height="4.7" fill="#fff"/>
<rect x="-5.2" y="0.5" width="4.7" height="4.7" fill="#fff"/><rect x="0.5" y="0.5" width="4.7" height="4.7" fill="#fff"/>
<path d="M-0.1,-6.2 V6.2 M-6.3,0 H6.3" stroke="#2b7d9d" stroke-width="1.1"/>
<rect x="-4.4" y="-4.3" width="2.2" height="2.2" fill="#2b7d9d"/><rect x="2" y="2" width="2.2" height="2.2" fill="#2b7d9d"/></g></g></svg>
<svg class="a" style="left:674px;top:94px;" width="35" height="35"><g transform="translate(0.3,0.4)"><g transform="translate(17.0,17.0)"><circle cx="0" cy="0" r="14.2" fill="none" stroke="#2b7d9d" stroke-width="1.1"/><rect x="-7" y="-6.4" width="14" height="2.2" fill="#2b7d9d"/><rect x="-7" y="4.2" width="14" height="2.2" fill="#2b7d9d"/>
<path d="M-6.6,-6 V6 M6.6,-6 V6" stroke="#2b7d9d" stroke-width="0.9"/>
<rect x="-5.2" y="-2.9" width="10.4" height="2.2" fill="#fff" stroke="#8db8cb" stroke-width="0.8"/>
<rect x="-5.2" y="0.7" width="10.4" height="2.2" fill="#fff" stroke="#8db8cb" stroke-width="0.8"/></g></g></svg>
<svg class="a" style="left:733px;top:94px;" width="35" height="35"><g transform="translate(0.5,0.4)"><g transform="translate(17.0,17.0)"><circle cx="0" cy="0" r="14.2" fill="none" stroke="#2b7d9d" stroke-width="1.1"/><path d="M-4.6,-7 H-1.6 V-5.4 H-1 L-0.4,6.8 H-7.4 L-5.2,-5.4 H-4.6 Z" fill="#2b7d9d"/>
<path d="M2,-7 H5 V-5.4 H5.6 L7.8,6.8 H0.8 L1.4,-5.4 H2 Z" fill="#2b7d9d"/>
<rect x="-1.2" y="-3.6" width="2.8" height="3.6" fill="#2b7d9d"/></g></g></svg>
<svg class="a" style="left:835px;top:94px;" width="35" height="35"><g transform="translate(0.5,0.4)"><g transform="translate(17.0,17.0)"><circle cx="0" cy="0" r="14.2" fill="none" stroke="#2b7d9d" stroke-width="1.1"/><path d="M-5.1,-0.4 V7.3 H0.4 M-5.1,-7.6 H2.5 L7.9,-2.2 V0.2 M2.5,-7.6 V-2.4 H7.7" fill="none" stroke="#2b7d9d" stroke-width="1.1"/>
<path d="M2.9,-6.6 L6.9,-2.8 H2.9 Z" fill="#8fbbcd"/>
<path d="M-7.3,-7.6 V-2.8 H-2" fill="none" stroke="#2b7d9d" stroke-width="1.6"/><path d="M-2.5,-5.4 L0.6,-2.8 L-2.5,-0.2 Z" fill="#2b7d9d"/>
<path d="M-5.1,-6.4 V-5 H-3.6" fill="none" stroke="#8fbbcd" stroke-width="0.9"/><polygon points="3.33,1.10 3.43,-0.15 4.77,-0.15 4.87,1.10 5.68,1.43 6.63,0.62 7.58,1.57 6.77,2.52 7.10,3.33 8.35,3.43 8.35,4.77 7.10,4.87 6.77,5.68 7.58,6.63 6.63,7.58 5.68,6.77 4.87,7.10 4.77,8.35 3.43,8.35 3.33,7.10 2.52,6.77 1.57,7.58 0.62,6.63 1.43,5.68 1.10,4.87 -0.15,4.77 -0.15,3.43 1.10,3.33 1.43,2.52 0.62,1.57 1.57,0.62 2.52,1.43" fill="#2b7d9d"/><circle cx="4.1" cy="4.1" r="1.25" fill="#fff"/></g></g></svg>
<svg class="a" style="left:878px;top:94px;" width="35" height="35"><g transform="translate(0.5,0.4)"><g transform="translate(17.0,17.0)"><circle cx="0" cy="0" r="14.2" fill="none" stroke="#2b7d9d" stroke-width="1.1"/><path d="M-5.1,-0.4 V7.3 H7.5 V-2.6 L2.3,-7.6 H-5.1 M2.3,-7.6 V-2.6 H7.5" fill="none" stroke="#2b7d9d" stroke-width="1.1"/>
<path d="M2.8,-6.6 L6.6,-3 H2.8 Z" fill="#8fbbcd"/>
<path d="M-7.3,-7.6 V-2.8 H-2" fill="none" stroke="#2b7d9d" stroke-width="1.6"/><path d="M-2.5,-5.4 L0.6,-2.8 L-2.5,-0.2 Z" fill="#2b7d9d"/>
<path d="M-5.1,-6.4 V-5 H-3.6" fill="none" stroke="#8fbbcd" stroke-width="0.9"/></g></g></svg>
<svg class="a" style="left:921px;top:94px;" width="35" height="35"><g transform="translate(0.5,0.4)"><g transform="translate(17.0,17.0)"><circle cx="0" cy="0" r="14.2" fill="none" stroke="#2b7d9d" stroke-width="1.1"/><text x="0" y="3.55" text-anchor="middle" font-family="'DejaVu Sans','Liberation Sans',sans-serif" font-weight="bold" font-size="9.3" textLength="20.6" lengthAdjust="spacingAndGlyphs" fill="#2b7d9d">HEX</text></g></g></svg>
<svg class="a" style="left:964px;top:94px;" width="35" height="35"><g transform="translate(0.5,0.4)"><g transform="translate(17.0,17.0)"><circle cx="0" cy="0" r="14.2" fill="none" stroke="#2b7d9d" stroke-width="1.1"/><path d="M-5.7,0.3 V-7.3 H2.2 L7,-2.4 V0.3 M2.2,-7.3 V-2.4 H7" fill="none" stroke="#2b7d9d" stroke-width="1.1"/>
<path d="M2.7,-6.3 L6.2,-2.9 H2.7 Z" fill="#8fbbcd"/>
<rect x="-5.7" y="-0.2" width="12.7" height="1.3" fill="#2b7d9d"/>
<rect x="-7.6" y="1.3" width="12.7" height="2.8" fill="#fff" stroke="#2b7d9d" stroke-width="0.9"/>
<rect x="-5.1" y="4.7" width="12.7" height="2.6" fill="#fff" stroke="#2b7d9d" stroke-width="0.9"/>
<rect x="-5.1" y="6.5" width="12.7" height="1.1" fill="#2b7d9d"/></g></g></svg>
<svg class="a" style="left:1007px;top:94px;" width="35" height="35"><g transform="translate(0.4,0.4)"><g transform="translate(17.0,17.0)"><circle cx="0" cy="0" r="14.2" fill="none" stroke="#2b7d9d" stroke-width="1.1"/><path d="M-7,-1.3 V7.3 Q-7,7.9 -6.4,7.9 H-0.9 Q-0.3,7.9 -0.3,7.3 V5" fill="none" stroke="#8db8cb" stroke-width="0.9"/>
<path d="M-6.8,-3.6 Q-6,-5 -3.8,-5.1" fill="none" stroke="#8db8cb" stroke-width="0.9"/>
<path d="M-4,-6.4 L-1.2,-5 L-4,-3.8 Z" fill="#2b7d9d"/>
<rect x="-3.2" y="-2.8" width="11.4" height="5.3" rx="0.7" fill="#fff" stroke="#8db8cb" stroke-width="0.9"/>
<path d="M0.3,-2.9 H8.2" stroke="#2b7d9d" stroke-width="1.1"/>
<path d="M-3,2.7 H8.2" stroke="#b8b8d8" stroke-width="0.8"/>
<rect x="-1.6" y="-0.5" width="1.2" height="1.2" fill="#2b7d9d"/></g></g></svg>
<svg class="a" style="left:1050px;top:94px;" width="35" height="35"><g transform="translate(0.4,0.4)"><g transform="translate(17.0,17.0)"><circle cx="0" cy="0" r="14.2" fill="none" stroke="#2b7d9d" stroke-width="1.1"/><path d="M-5.2,-6 H-3.2 V3.8 H0.6 M-3.2,-1.9 H0.6" fill="none" stroke="#2b7d9d" stroke-width="1"/>
<path d="M0.8,-4.1 H3 L3.6,-3.3 H6.3 V-0.3 H0.8 Z" fill="#2b7d9d"/>
<path d="M0.8,1.6 H3 L3.6,2.4 H6.3 V5.4 H0.8 Z" fill="#2b7d9d"/></g></g></svg>
<svg class="a" style="left:1093px;top:94px;" width="35" height="35"><g transform="translate(0.3,0.4)"><g transform="translate(17.0,17.0)"><circle cx="0" cy="0" r="14.2" fill="none" stroke="#2b7d9d" stroke-width="1.1"/><text x="-2" y="5.4" text-anchor="middle" font-family="'Liberation Sans','DejaVu Sans',sans-serif" font-weight="bold" font-size="15" textLength="10.6" lengthAdjust="spacingAndGlyphs" fill="#2b7d9d" stroke="#2b7d9d" stroke-width="0.35">#</text>
<rect x="1.9" y="4.7" width="4.5" height="1.3" fill="#2b7d9d"/></g></g></svg>
<svg class="a" style="left:776px;top:94px;" width="35" height="35"><g transform="translate(0.5,0.4)"><g transform="translate(17.0,17.0)"><circle cx="0" cy="0" r="14.2" fill="#eef1f5" stroke="#8fb6c8" stroke-width="1.1"/><rect x="-8.2" y="-4.6" width="16.8" height="1" fill="#b4bcc8"/>
<rect x="-8" y="-1" width="7.6" height="6" fill="#dfe3ea" stroke="#b4bcc8" stroke-width="0.8"/>
<path d="M-7.4,4.4 L-5,1.4 L-3.6,3 L-2.6,2.2 L-1,4.4 Z" fill="#b4bcc8"/>
<rect x="2.6" y="0" width="5.2" height="1.2" fill="#b4bcc8"/><rect x="2.6" y="3.2" width="5.2" height="1.2" fill="#b4bcc8"/></g></g></svg>
<svg class="a" style="left:510px;top:109px;" width="10" height="7"><g transform="translate(0.2,0)"><polygon points="0.1,0 8.9,0 4.5,5.6" fill="#2b7d9d"/></g></svg>
<svg class="a" style="left:655px;top:109px;" width="10" height="7"><g transform="translate(0.0,0)"><polygon points="0.1,0 8.9,0 4.5,5.6" fill="#2b7d9d"/></g></svg>
<svg class="a" style="left:714px;top:109px;" width="10" height="7"><g transform="translate(0.0,0)"><polygon points="0.1,0 8.9,0 4.5,5.6" fill="#2b7d9d"/></g></svg>
<svg class="a" style="left:816px;top:109px;" width="10" height="7"><g transform="translate(0.0,0)"><polygon points="0.1,0 8.9,0 4.5,5.6" fill="#8fb0c2"/></g></svg>
<div class="a" style="left:423px;top:133px;width:616px;height:22px;background:#fff;border:1px solid #b9b9b9;"></div>
<svg class="a" style="left:428px;top:137px;" width="18" height="14"><g transform="translate(0.7,0.2) scale(1.0250,1.0667)"><defs><linearGradient id="fg4" x1="0" y1="0" x2="0" y2="1"><stop offset="0" stop-color="#e1d0b6"/><stop offset="0.45" stop-color="#dcc5a9"/><stop offset="0.85" stop-color="#d5b092"/><stop offset="1" stop-color="#d0a686"/></linearGradient></defs>
<g><path d="M1.6,0.2 H6.2 Q7,0.2 7.2,0.8 L7.4,1.3 H15 Q16,1.3 16,2.3 V11 Q16,12 15,12 H1 Q0,12 0,11 V2.2 Q0,1.3 0.8,1.2 Q0.9,0.2 1.6,0.2 Z" fill="url(#fg4)"/></g></g></svg>
<svg class="a" style="left:456px;top:140px;" width="8" height="8"><g transform="translate(0.5,0.5)"><circle cx="3.5" cy="3.5" r="2.7" fill="#67b05c"/></g></svg>
<span class="t" style="top:137.00px;font-size:12px;color:#111;letter-spacing:-1.375px;left:469.30px;">$</span>
<svg class="a" style="left:485px;top:140px;" width="8" height="8"><g transform="translate(0,0.5)"><circle cx="3.5" cy="3.5" r="2.7" fill="#67b05c"/></g></svg>
<span class="t" style="top:137.00px;font-size:12px;color:#111;letter-spacing:-0.758px;left:496.60px;">System Volume Information</span>
<div class="a" style="left:1047px;top:133px;width:150px;height:22px;background:#fff;border:1px solid #b9b9b9;"></div>
<div class="a" style="left:1173px;top:134px;width:1px;height:20px;background:#b9b9b9;"></div>
<span class="t" style="top:137.00px;font-size:12px;color:#a8a8b0;font-style:italic;letter-spacing:-0.609px;left:1049.00px;">Quick find...</span>
<svg class="a" style="left:1176px;top:136px;" width="19" height="18"><g transform="translate(0,0)"><circle cx="6.9" cy="6.4" r="4.4" fill="none" stroke="#3c7ad0" stroke-width="1.2"/><path d="M10,9.6 L15,14.2" stroke="#2f6cc4" stroke-width="1.8" stroke-linecap="round"/></g></svg>
<svg class="a" style="left:427px;top:167px;" width="10" height="10"><g transform="translate(0,0)"><rect x="0.5" y="0.5" width="8" height="8" rx="0.8" fill="#f2f2f2" stroke="#8e8e8e" stroke-width="1"/><path d="M2.2,4.5 H6.8" stroke="#3a3ab8" stroke-width="1"/></g></svg>
<svg class="a" style="left:440px;top:162px;" width="18" height="18"><g transform="translate(0.4,0.3)"><circle cx="8.5" cy="8.5" r="7.3" fill="#fff" stroke="#1d8f1d" stroke-width="1.5"/>
<path d="M8.5,8.5 V1.2 A7.3,7.3 0 0 0 1.7,5.8 Z" fill="#1d8f1d"/></g></svg>
<span class="t" style="top:164.00px;font-size:12px;color:#111;letter-spacing:-0.832px;left:460.80px;">NTFS volume</span>
<div class="a" style="left:453px;top:291px;width:160px;height:22px;background:#ececec;"></div>
<svg class="a" style="left:443px;top:187px;" width="9" height="11"><g transform="translate(0,0)"><path d="M0.5,0 V9 M2,5.5 H8" stroke="#bdbdbd" stroke-width="1" stroke-dasharray="1 1" fill="none"/></g></svg>
<svg class="a" style="left:456px;top:184px;" width="18" height="15"><g transform="translate(0.8,0.8) scale(1.0375,1.0833)"><defs><linearGradient id="fg5" x1="0" y1="0" x2="0" y2="1"><stop offset="0" stop-color="#e1d0b6"/><stop offset="0.45" stop-color="#dcc5a9"/><stop offset="0.85" stop-color="#d5b092"/><stop offset="1" stop-color="#d0a686"/></linearGradient></defs>
<g><path d="M1.6,0.2 H6.2 Q7,0.2 7.2,0.8 L7.4,1.3 H15 Q16,1.3 16,2.3 V11 Q16,12 15,12 H1 Q0,12 0,11 V2.2 Q0,1.3 0.8,1.2 Q0.9,0.2 1.6,0.2 Z" fill="url(#fg5)"/></g></g></svg>
<span class="t" style="top:185.00px;font-size:12px;color:#808080;letter-spacing:-0.765px;left:478.50px;">$Extend</span>
<svg class="a" style="left:443px;top:209px;" width="9" height="11"><g transform="translate(0,0)"><path d="M0.5,0 V9 M2,5.5 H8" stroke="#bdbdbd" stroke-width="1" stroke-dasharray="1 1" fill="none"/></g></svg>
<svg class="a" style="left:456px;top:206px;" width="18" height="15"><g transform="translate(0.8,0.8) scale(1.0375,1.0833)"><defs><linearGradient id="fg6" x1="0" y1="0" x2="0" y2="1"><stop offset="0" stop-color="#e1d0b6"/><stop offset="0.45" stop-color="#dcc5a9"/><stop offset="0.85" stop-color="#d5b092"/><stop offset="1" stop-color="#d0a686"/></linearGradient></defs>
<g><path d="M1.6,0.2 H6.2 Q7,0.2 7.2,0.8 L7.4,1.3 H15 Q16,1.3 16,2.3 V11 Q16,12 15,12 H1 Q0,12 0,11 V2.2 Q0,1.3 0.8,1.2 Q0.9,0.2 1.6,0.2 Z" fill="url(#fg6)"/></g></g></svg>
<span class="t" style="top:207.00px;font-size:12px;color:#111;letter-spacing:-0.951px;left:478.50px;">Documents</span>
<svg class="a" style="left:443px;top:231px;" width="9" height="11"><g transform="translate(0,0)"><path d="M0.5,0 V9 M2,5.5 H8" stroke="#bdbdbd" stroke-width="1" stroke-dasharray="1 1" fill="none"/></g></svg>
<svg class="a" style="left:456px;top:228px;" width="18" height="15"><g transform="translate(0.8,0.8) scale(1.0375,1.0833)"><defs><linearGradient id="fg7" x1="0" y1="0" x2="0" y2="1"><stop offset="0" stop-color="#e1d0b6"/><stop offset="0.45" stop-color="#dcc5a9"/><stop offset="0.85" stop-color="#d5b092"/><stop offset="1" stop-color="#d0a686"/></linearGradient></defs>
<g><path d="M1.6,0.2 H6.2 Q7,0.2 7.2,0.8 L7.4,1.3 H15 Q16,1.3 16,2.3 V11 Q16,12 15,12 H1 Q0,12 0,11 V2.2 Q0,1.3 0.8,1.2 Q0.9,0.2 1.6,0.2 Z" fill="url(#fg7)"/></g></g></svg>
<span class="t" style="top:229.00px;font-size:12px;color:#111;letter-spacing:-0.747px;left:478.50px;">Music</span>
<svg class="a" style="left:443px;top:253px;" width="9" height="11"><g transform="translate(0,0)"><path d="M0.5,0 V9 M2,5.5 H8" stroke="#bdbdbd" stroke-width="1" stroke-dasharray="1 1" fill="none"/></g></svg>
<svg class="a" style="left:456px;top:250px;" width="18" height="15"><g transform="translate(0.8,0.8) scale(1.0375,1.0833)"><defs><linearGradient id="fg8" x1="0" y1="0" x2="0" y2="1"><stop offset="0" stop-color="#e1d0b6"/><stop offset="0.45" stop-color="#dcc5a9"/><stop offset="0.85" stop-color="#d5b092"/><stop offset="1" stop-color="#d0a686"/></linearGradient></defs>
<g><path d="M1.6,0.2 H6.2 Q7,0.2 7.2,0.8 L7.4,1.3 H15 Q16,1.3 16,2.3 V11 Q16,12 15,12 H1 Q0,12 0,11 V2.2 Q0,1.3 0.8,1.2 Q0.9,0.2 1.6,0.2 Z" fill="url(#fg8)"/></g></g></svg>
<span class="t" style="top:251.00px;font-size:12px;color:#111;letter-spacing:-0.487px;left:478.50px;">Photos</span>
<svg class="a" style="left:443px;top:275px;" width="9" height="11"><g transform="translate(0,0)"><path d="M0.5,0 V9 M2,5.5 H8" stroke="#bdbdbd" stroke-width="1" stroke-dasharray="1 1" fill="none"/></g></svg>
<svg class="a" style="left:456px;top:272px;" width="18" height="15"><g transform="translate(0.8,0.8) scale(1.0375,1.0833)"><defs><linearGradient id="fg9" x1="0" y1="0" x2="0" y2="1"><stop offset="0" stop-color="#e1d0b6"/><stop offset="0.45" stop-color="#dcc5a9"/><stop offset="0.85" stop-color="#d5b092"/><stop offset="1" stop-color="#d0a686"/></linearGradient></defs>
<g><path d="M1.6,0.2 H6.2 Q7,0.2 7.2,0.8 L7.4,1.3 H15 Q16,1.3 16,2.3 V11 Q16,12 15,12 H1 Q0,12 0,11 V2.2 Q0,1.3 0.8,1.2 Q0.9,0.2 1.6,0.2 Z" fill="url(#fg9)"/></g></g></svg>
<span class="t" style="top:273.00px;font-size:12px;color:#111;letter-spacing:-0.525px;left:478.50px;">Pictures</span>
<svg class="a" style="left:442px;top:297px;" width="10" height="10"><g transform="translate(0,0.5)"><rect x="0.5" y="0.5" width="8" height="8" rx="0.8" fill="#f2f2f2" stroke="#8e8e8e" stroke-width="1"/><path d="M2.2,4.5 H6.8 M4.5,2.2 V6.8" stroke="#3a3ab8" stroke-width="1"/></g></svg>
<svg class="a" style="left:456px;top:294px;" width="18" height="15"><g transform="translate(0.8,0.8) scale(1.0375,1.0833)"><defs><linearGradient id="fg10" x1="0" y1="0" x2="0" y2="1"><stop offset="0" stop-color="#e1d0b6"/><stop offset="0.45" stop-color="#dcc5a9"/><stop offset="0.85" stop-color="#d5b092"/><stop offset="1" stop-color="#d0a686"/></linearGradient></defs>
<g><path d="M1.6,0.2 H6.2 Q7,0.2 7.2,0.8 L7.4,1.3 H15 Q16,1.3 16,2.3 V11 Q16,12 15,12 H1 Q0,12 0,11 V2.2 Q0,1.3 0.8,1.2 Q0.9,0.2 1.6,0.2 Z" fill="url(#fg10)"/></g></g></svg>
<span class="t" style="top:295.00px;font-size:12px;color:#111;letter-spacing:-0.746px;left:478.50px;">System Volume Information</span>
<svg class="a" style="left:443px;top:319px;" width="9" height="11"><g transform="translate(0,0)"><path d="M0.5,0 V9 M2,5.5 H8" stroke="#bdbdbd" stroke-width="1" stroke-dasharray="1 1" fill="none"/></g></svg>
<svg class="a" style="left:456px;top:316px;" width="18" height="15"><g transform="translate(0.8,0.8) scale(1.0375,1.0833)"><defs><linearGradient id="fg11" x1="0" y1="0" x2="0" y2="1"><stop offset="0" stop-color="#e1d0b6"/><stop offset="0.45" stop-color="#dcc5a9"/><stop offset="0.85" stop-color="#d5b092"/><stop offset="1" stop-color="#d0a686"/></linearGradient></defs>
<g><path d="M1.6,0.2 H6.2 Q7,0.2 7.2,0.8 L7.4,1.3 H15 Q16,1.3 16,2.3 V11 Q16,12 15,12 H1 Q0,12 0,11 V2.2 Q0,1.3 0.8,1.2 Q0.9,0.2 1.6,0.2 Z" fill="url(#fg11)"/></g></g></svg>
<span class="t" style="top:317.00px;font-size:12px;color:#111;letter-spacing:-0.727px;left:478.50px;">Videos</span>
<div class="a" style="left:679px;top:160px;width:1px;height:321px;background:#e0e0e0;"></div>
<div class="a" style="left:843px;top:162px;width:1px;height:21px;background:#e7e7e7;"></div>
<div class="a" style="left:966px;top:162px;width:1px;height:21px;background:#e7e7e7;"></div>
<div class="a" style="left:1029px;top:162px;width:1px;height:21px;background:#e7e7e7;"></div>
<div class="a" style="left:1112px;top:162px;width:1px;height:21px;background:#e7e7e7;"></div>
<span class="t" style="top:165.00px;font-size:12px;color:#111;letter-spacing:-1.140px;left:687.20px;">Name</span>
<span class="t" style="top:165.00px;font-size:12px;color:#111;letter-spacing:-0.703px;left:850.20px;">Date</span>
<span class="t" style="top:165.00px;font-size:12px;color:#111;letter-spacing:-0.152px;left:973.30px;">Type</span>
<span class="t" style="top:165.00px;font-size:12px;color:#111;letter-spacing:-0.793px;left:1085.30px;">Size</span>
<div class="a" style="left:682px;top:359px;width:515px;height:22px;background:#ececec;"></div>
<svg class="a" style="left:684px;top:187px;" width="18" height="14"><g transform="translate(0.7,0.2) scale(1.0500,1.0667)"><defs><linearGradient id="fg12" x1="0" y1="0" x2="0" y2="1"><stop offset="0" stop-color="#e1d0b6"/><stop offset="0.45" stop-color="#dcc5a9"/><stop offset="0.85" stop-color="#d5b092"/><stop offset="1" stop-color="#d0a686"/></linearGradient></defs>
<g><path d="M1.6,0.2 H6.2 Q7,0.2 7.2,0.8 L7.4,1.3 H15 Q16,1.3 16,2.3 V11 Q16,12 15,12 H1 Q0,12 0,11 V2.2 Q0,1.3 0.8,1.2 Q0.9,0.2 1.6,0.2 Z" fill="url(#fg12)"/></g></g></svg>
<span class="t" style="top:187.00px;font-size:12px;color:#111;letter-spacing:-1.052px;left:707.50px;">EDP</span>
<span class="t" style="top:187.00px;font-size:12px;color:#111;letter-spacing:-0.579px;left:848.70px;">01.10.2025 13:00:38</span>
<span class="t" style="top:187.00px;font-size:12px;color:#111;letter-spacing:-0.477px;left:971.00px;">File folder</span>
<svg class="a" style="left:684px;top:209px;" width="18" height="14"><g transform="translate(0.7,0.2) scale(1.0500,1.0667)"><defs><linearGradient id="fg13" x1="0" y1="0" x2="0" y2="1"><stop offset="0" stop-color="#e1d0b6"/><stop offset="0.45" stop-color="#dcc5a9"/><stop offset="0.85" stop-color="#d5b092"/><stop offset="1" stop-color="#d0a686"/></linearGradient></defs>
<g><path d="M1.6,0.2 H6.2 Q7,0.2 7.2,0.8 L7.4,1.3 H15 Q16,1.3 16,2.3 V11 Q16,12 15,12 H1 Q0,12 0,11 V2.2 Q0,1.3 0.8,1.2 Q0.9,0.2 1.6,0.2 Z" fill="url(#fg13)"/></g></g></svg>
<span class="t" style="top:209.00px;font-size:12px;color:#808080;letter-spacing:-0.758px;left:707.50px;">SPP</span>
<span class="t" style="top:209.00px;font-size:12px;color:#808080;letter-spacing:-0.579px;left:848.70px;">01.10.2025 13:19:11</span>
<span class="t" style="top:209.00px;font-size:12px;color:#808080;letter-spacing:-0.477px;left:971.00px;">File folder</span>
<svg class="a" style="left:684px;top:232px;" width="19" height="12"><g transform="translate(0.3,0.4)"><path d="M0.5,0.5 H13.8 L17.3,3.8 V10.3 H0.5 Z" fill="#fbfbfb" stroke="#a8a8a8" stroke-width="0.9"/></g></svg>
<span class="t" style="top:231.00px;font-size:12px;color:#111;letter-spacing:-0.738px;left:707.50px;">IndexerVolumeGuid</span>
<span class="t" style="top:231.00px;font-size:12px;color:#111;letter-spacing:-0.579px;left:848.70px;">01.10.2025 12:49:47</span>
<span class="t" style="top:231.00px;font-size:12px;color:#111;letter-spacing:-0.371px;left:971.00px;">File</span>
<span class="t" style="top:231.00px;font-size:12px;color:#111;letter-spacing:-0.676px;left:1068.80px;">76 bytes</span>
<svg class="a" style="left:684px;top:254px;" width="19" height="12"><g transform="translate(0.3,0.4)"><path d="M0.5,0.5 H13.8 L17.3,3.8 V10.3 H0.5 Z" fill="#fbfbfb" stroke="#a8a8a8" stroke-width="0.9"/></g></svg>
<span class="t" style="top:253.00px;font-size:12px;color:#111;letter-spacing:-0.544px;left:707.50px;">WPSettings.dat</span>
<span class="t" style="top:253.00px;font-size:12px;color:#111;letter-spacing:-0.579px;left:848.70px;">01.10.2025 12:49:46</span>
<span class="t" style="top:253.00px;font-size:12px;color:#111;letter-spacing:-0.371px;left:971.00px;">File</span>
<span class="t" style="top:253.00px;font-size:12px;color:#111;letter-spacing:-0.788px;left:1069.70px;">12 bytes</span>
<svg class="a" style="left:684px;top:276px;" width="19" height="12"><g transform="translate(0.3,0.4)"><path d="M0.5,0.5 H13.8 L17.3,3.8 V10.3 H0.5 Z" fill="#fbfbfb" stroke="#c4c4c4" stroke-width="0.9"/></g></svg>
<span class="t" style="top:275.00px;font-size:12px;color:#808080;letter-spacing:-0.730px;left:707.50px;">tracking.log</span>
<span class="t" style="top:275.00px;font-size:12px;color:#808080;letter-spacing:-0.579px;left:848.70px;">01.10.2025 12:49:46</span>
<span class="t" style="top:275.00px;font-size:12px;color:#808080;letter-spacing:-0.371px;left:971.00px;">File</span>
<span class="t" style="top:275.00px;font-size:12px;color:#808080;letter-spacing:-0.789px;left:1067.80px;">20.00 KB</span>
<svg class="a" style="left:684px;top:298px;" width="19" height="12"><g transform="translate(0.3,0.4)"><path d="M0.5,0.5 H13.8 L17.3,3.8 V10.3 H0.5 Z" fill="#fbfbfb" stroke="#c4c4c4" stroke-width="0.9"/></g></svg>
<span class="t" style="top:297.00px;font-size:12px;color:#808080;letter-spacing:-0.659px;left:707.50px;">{3808876b-c176-4e48-b...</span>
<span class="t" style="top:297.00px;font-size:12px;color:#808080;letter-spacing:-0.579px;left:848.70px;">01.10.2025 13:14:44</span>
<span class="t" style="top:297.00px;font-size:12px;color:#808080;letter-spacing:-0.371px;left:971.00px;">File</span>
<span class="t" style="top:297.00px;font-size:12px;color:#808080;letter-spacing:-0.727px;left:1067.30px;">64.00 KB</span>
<svg class="a" style="left:684px;top:320px;" width="19" height="12"><g transform="translate(0.3,0.4)"><path d="M0.5,0.5 H13.8 L17.3,3.8 V10.3 H0.5 Z" fill="#fbfbfb" stroke="#c4c4c4" stroke-width="0.9"/></g></svg>
<span class="t" style="top:319.00px;font-size:12px;color:#808080;letter-spacing:-0.634px;left:707.50px;">{5aeb3d6b-9e17-11f0-89...</span>
<span class="t" style="top:319.00px;font-size:12px;color:#808080;letter-spacing:-0.579px;left:848.70px;">01.10.2025 13:17:08</span>
<span class="t" style="top:319.00px;font-size:12px;color:#808080;letter-spacing:-0.371px;left:971.00px;">File</span>
<span class="t" style="top:319.00px;font-size:12px;color:#808080;letter-spacing:-0.927px;left:1072.60px;">1.95 MB</span>
<svg class="a" style="left:684px;top:342px;" width="19" height="12"><g transform="translate(0.3,0.4)"><path d="M0.5,0.5 H13.8 L17.3,3.8 V10.3 H0.5 Z" fill="#fbfbfb" stroke="#c4c4c4" stroke-width="0.9"/></g></svg>
<span class="t" style="top:341.00px;font-size:12px;color:#808080;letter-spacing:-0.614px;left:707.50px;">{5aeb3daa-9e17-11f0-89...</span>
<span class="t" style="top:341.00px;font-size:12px;color:#808080;letter-spacing:-0.579px;left:848.70px;">01.10.2025 13:19:09</span>
<span class="t" style="top:341.00px;font-size:12px;color:#808080;letter-spacing:-0.371px;left:971.00px;">File</span>
<span class="t" style="top:341.00px;font-size:12px;color:#808080;letter-spacing:-0.881px;left:1066.30px;">55.56 MB</span>
<svg class="a" style="left:684px;top:364px;" width="19" height="12"><g transform="translate(0.3,0.4)"><path d="M0.5,0.5 H13.8 L17.3,3.8 V10.3 H0.5 Z" fill="#fbfbfb" stroke="#c4c4c4" stroke-width="0.9"/></g></svg>
<span class="t" style="top:363.00px;font-size:12px;color:#808080;letter-spacing:-0.617px;left:707.50px;">{5aeb3dc1-9e17-11f0-89...</span>
<span class="t" style="top:363.00px;font-size:12px;color:#808080;letter-spacing:-0.579px;left:848.70px;">01.10.2025 13:19:05</span>
<span class="t" style="top:363.00px;font-size:12px;color:#808080;letter-spacing:-0.371px;left:971.00px;">File</span>
<span class="t" style="top:363.00px;font-size:12px;color:#808080;letter-spacing:-0.819px;left:1072.80px;">1.00 GB</span>
<div class="a" style="left:422px;top:482px;width:778px;height:1px;background:#e4e4e4;"></div>
<div class="a" style="left:422px;top:505px;width:778px;height:1px;background:#c6c6da;"></div>
<svg class="a" style="left:425px;top:489px;" width="10" height="11"><g transform="translate(0,0.7)"><circle cx="4.5" cy="4.5" r="4.1" fill="#2ebd7e"/></g></svg>
<span class="t" style="top:487.00px;font-size:12px;color:#111;letter-spacing:-0.734px;left:438.70px;">Selected File “{5aeb3dc1-9e17-11f0-891c-00e01c3bb779}</span>
<span class="t" style="top:487.00px;font-size:12px;color:#111;letter-spacing:-0.817px;left:719.50px;">{3808876b-c176-4e48-b7ae-04046e6cc752}</span>
<span class="t" style="top:487.00px;font-size:12px;color:#111;letter-spacing:-1.394px;left:934.20px;">”</span>
<span class="t" style="top:487.00px;font-size:12px;color:#111;letter-spacing:-0.350px;left:941.20px;">with size 1.00 GB</span>
<svg class="a" style="left:473px;top:547px;" width="182" height="141"><g transform="translate(0,0)"><defs>
<linearGradient id="pvg" x1="0" y1="0" x2="1" y2="0.6"><stop offset="0" stop-color="#f0f3f8"/><stop offset="0.6" stop-color="#fbfcfd"/><stop offset="1" stop-color="#eef1f6"/></linearGradient>
<linearGradient id="pvc" x1="0" y1="1" x2="1" y2="0"><stop offset="0" stop-color="#fff"/><stop offset="1" stop-color="#d5deee"/></linearGradient>
</defs>
<path d="M1.5,0.8 H149 L179.2,30.5 V137.5 Q179.2,138.8 177.8,138.8 H1.5 Q0.6,138.8 0.6,137.6 V2 Q0.6,0.8 1.5,0.8 Z" fill="url(#pvg)" stroke="#a9bce0" stroke-width="1.2"/>
<rect x="2.4" y="108" width="175.6" height="29.4" fill="#dfe3ea"/>
<path d="M149,0.8 L179.2,30.5 H151 Q149,30.5 149,28.5 Z" fill="url(#pvc)" stroke="#a9bce0" stroke-width="1.1" stroke-linejoin="round"/></g></svg>
<span class="t" style="top:564.00px;font-size:7px;color:#777;font-family:'Liberation Mono','DejaVu Sans Mono',monospace;letter-spacing:0.111px;left:489.20px;">k♦.8vÁHN·☻..nlÇR</span>
<span class="t" style="top:574.00px;font-size:7px;color:#777;font-family:'Liberation Mono','DejaVu Sans Mono',monospace;letter-spacing:0.111px;left:489.20px;">................</span>
<span class="t" style="top:584.00px;font-size:7px;color:#777;font-family:'Liberation Mono','DejaVu Sans Mono',monospace;letter-spacing:0.111px;left:489.20px;">.€¦ç............</span>
<span class="t" style="top:594.00px;font-size:7px;color:#777;font-family:'Liberation Mono','DejaVu Sans Mono',monospace;letter-spacing:0.111px;left:489.20px;">„...............</span>
<span class="t" style="top:604.00px;font-size:7px;color:#777;font-family:'Liberation Mono','DejaVu Sans Mono',monospace;letter-spacing:0.111px;left:489.20px;">................</span>
<span class="t" style="top:614.00px;font-size:7px;color:#777;font-family:'Liberation Mono','DejaVu Sans Mono',monospace;letter-spacing:0.111px;left:489.20px;">................</span>
<span class="t" style="top:624.00px;font-size:7px;color:#777;font-family:'Liberation Mono','DejaVu Sans Mono',monospace;letter-spacing:0.111px;left:489.20px;">................</span>
<span class="t" style="top:634.00px;font-size:7px;color:#777;font-family:'Liberation Mono','DejaVu Sans Mono',monospace;letter-spacing:0.111px;left:489.20px;">................</span>
<span class="t" style="top:562.00px;font-size:13px;color:#2c6496;font-weight:bold;letter-spacing:-0.973px;left:715.50px;">{5aeb3dc1-9e17-11f0-891c-00e01c3bb779}{3808876b-c176-4e48</span>
<span class="t" style="top:580.00px;font-size:12px;color:#2c6496;letter-spacing:-0.371px;left:715.50px;">File</span>
<span class="t" style="top:600.00px;font-size:12px;color:#2c6496;letter-spacing:-0.592px;left:715.50px;">Modified: 01.10.2025 13:19:05</span>
<span class="t" style="top:615.00px;font-size:12px;color:#2c6496;letter-spacing:-0.701px;left:715.50px;">Size: 1.0 GB</span>
<svg class="a" style="left:712px;top:639px;" width="36" height="35"><g transform="translate(0.8,0.0)"><g transform="translate(17.0,17.0)"><circle cx="0" cy="0" r="11.7" fill="none" stroke="#4a86a8" stroke-width="1"/><path d="M-6.6,0.1 Q0,-8 6.6,0.1 Q0,8.2 -6.6,0.1 Z" fill="#2b7d9d"/><circle cx="0" cy="0.1" r="3.1" fill="#fff"/><circle cx="0" cy="0.1" r="1.9" fill="#2b7d9d"/></g></g></svg>
<span class="t" style="top:649.00px;font-size:13px;color:#2c6496;font-weight:bold;letter-spacing:-0.470px;left:752.00px;">View</span>
<svg class="a" style="left:805px;top:639px;" width="36" height="35"><g transform="translate(0.7,0.0)"><g transform="translate(17.0,17.0)"><circle cx="0" cy="0" r="11.7" fill="none" stroke="#4a86a8" stroke-width="1"/><g transform="translate(0,0) scale(0.8)"><path d="M-6.5,-6.4 H5.4 L6.6,-5.2 V6.4 H-6.5 Z" fill="#2b7d9d"/>
<rect x="-4.6" y="-5.4" width="9.2" height="4.8" fill="#f2f7fa"/>
<rect x="-2.8" y="3.4" width="5.6" height="3.1" fill="#fff"/><rect x="-1.4" y="4.6" width="2" height="1.9" fill="#2b7d9d"/></g></g></g></svg>
<span class="t" style="top:649.00px;font-size:13px;color:#2c6496;font-weight:bold;letter-spacing:-0.883px;left:845.00px;">Save as...</span>
<div class="a" style="left:955px;top:370px;width:235px;height:328px;background:#fff;border:1px solid #b4b4b4;box-shadow:3px 3px 3px rgba(0,0,0,0.38);"></div>
<span class="t" style="top:373.00px;font-size:13px;color:#2d4a6c;letter-spacing:-0.213px;left:962.30px;">Save this object to...</span>
<span class="t" style="top:394.00px;font-size:13px;color:#2d4a6c;letter-spacing:-0.441px;left:962.30px;">Save with full path</span>
<span class="t" style="top:415.00px;font-size:13px;color:#2d4a6c;letter-spacing:-0.438px;left:962.30px;">Create batch copying task</span>
<div class="a" style="left:962px;top:434px;width:221px;height:1px;background:#9dabc0;"></div>
<span class="t" style="top:439.00px;font-size:13px;color:#2d4a6c;letter-spacing:-0.569px;left:962.30px;">Display contents</span>
<span class="t" style="top:460.00px;font-size:13px;color:#2d4a6c;letter-spacing:-0.446px;left:962.30px;">Open with default installed program</span>
<span class="t" style="top:481.00px;font-size:13px;color:#2d4a6c;letter-spacing:-0.545px;left:962.30px;">Open in hexadecimal viewer</span>
<div class="a" style="left:962px;top:500px;width:221px;height:1px;background:#9dabc0;"></div>
<span class="t" style="top:505.00px;font-size:13px;color:#2d4a6c;letter-spacing:-0.321px;left:962.30px;">Report of files/folders...</span>
<span class="t" style="top:526.00px;font-size:13px;color:#2d4a6c;letter-spacing:-0.387px;left:962.30px;">Detect and open a contained file system</span>
<span class="t" style="top:547.00px;font-size:13px;color:#2d4a6c;letter-spacing:-0.626px;left:962.30px;">Open as a disk image</span>
<div class="a" style="left:955px;top:563px;width:235px;height:25px;background:#dbe4ee;border:2px solid #e8ab43;"></div>
<span class="t" style="top:568.00px;font-size:13px;color:#2d4a6c;letter-spacing:-0.304px;left:962.30px;">Open restore point</span>
<span class="t" style="top:592.00px;font-size:13px;color:#2d4a6c;letter-spacing:-0.392px;left:962.30px;">Go to on-disk data start</span>
<span class="t" style="top:613.00px;font-size:13px;color:#2d4a6c;letter-spacing:-0.446px;left:962.30px;">Show on-disk fragments</span>
<span class="t" style="top:634.00px;font-size:13px;color:#2d4a6c;letter-spacing:-0.357px;left:962.30px;">Go to on-disk object descriptor</span>
<div class="a" style="left:962px;top:653px;width:221px;height:1px;background:#9dabc0;"></div>
<span class="t" style="top:658.00px;font-size:13px;color:#2d4a6c;letter-spacing:-0.276px;left:962.30px;">Show extended attributes</span>
<span class="t" style="top:679.00px;font-size:13px;color:#2d4a6c;letter-spacing:-0.349px;left:962.30px;">Show properties</span>
</body></html>
